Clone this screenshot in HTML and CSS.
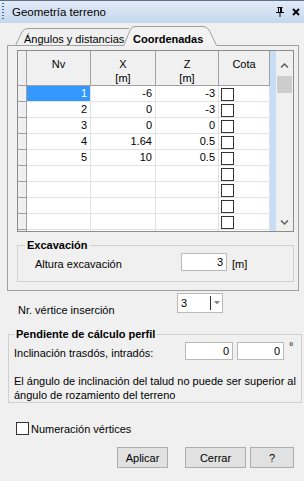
FILE: index.html
```html
<!DOCTYPE html>
<html lang="es">
<head>
    <meta charset="UTF-8">
    <title>Geometría terreno</title>
    <link rel="stylesheet" href="styles.css">
</head>
<body>
    <div class="titlebar">
        <span class="grip"></span>
        <span class="title">Geometría terreno</span>
        <span class="tb-icons">
            <svg width="8" height="10" viewBox="0 0 8 10">
                <path d="M1.5 0.5h5M2.5 0.5v5M5.5 0.5v5M0 5.5h8M4 6v4" stroke="#000" stroke-width="1" fill="none"/>
                <path d="M4.5 1v4.5" stroke="#000" stroke-width="1"/>
            </svg>
            <svg width="8" height="8" viewBox="0 0 8 8">
                <path d="M1 1L7 7M7 1L1 7" stroke="#000" stroke-width="1.8"/>
            </svg>
        </span>
    </div>

    <div class="tabstrip">
        <svg class="tab-lines" width="304" height="23" viewBox="0 0 304 23">
            <path d="M7.5 23V22.5H15.5L22 9Q24 5.5 28 5.5H129" stroke="#a0a0a0" fill="none"/>
            <path d="M15.5 22.5H124" stroke="#a0a0a0" fill="none"/>
            <path d="M123.5 23L130 7.5Q131.5 3.5 135 3.5H203Q207 3.5 209 7L216.5 22.5H298.5V23" fill="#f3f3f3" stroke="#a0a0a0"/>
        </svg>
        <span class="tab tab-first">Ángulos y distancias</span>
        <span class="tab tab-active">Coordenadas</span>
    </div>

    <div class="tabpage">
        <div class="grid">
            <div class="grid-main">
                <div class="gr head">
                    <div class="rh"></div>
                    <div>Nv</div>
                    <div>X<br>[m]</div>
                    <div>Z<br>[m]</div>
                    <div>Cota</div>
                </div>
                <div class="gr">
                    <div class="rh"></div>
                    <div class="num cur">1</div>
                    <div class="num">-6</div>
                    <div class="num">-3</div>
                    <div class="ck"><span class="box"></span></div>
                </div>
                <div class="gr">
                    <div class="rh"></div>
                    <div class="num">2</div>
                    <div class="num">0</div>
                    <div class="num">-3</div>
                    <div class="ck"><span class="box"></span></div>
                </div>
                <div class="gr">
                    <div class="rh"></div>
                    <div class="num">3</div>
                    <div class="num">0</div>
                    <div class="num">0</div>
                    <div class="ck"><span class="box"></span></div>
                </div>
                <div class="gr">
                    <div class="rh"></div>
                    <div class="num">4</div>
                    <div class="num">1.64</div>
                    <div class="num">0.5</div>
                    <div class="ck"><span class="box"></span></div>
                </div>
                <div class="gr">
                    <div class="rh"></div>
                    <div class="num">5</div>
                    <div class="num">10</div>
                    <div class="num">0.5</div>
                    <div class="ck"><span class="box"></span></div>
                </div>
                <div class="gr">
                    <div class="rh"></div><div></div><div></div><div></div>
                    <div class="ck"><span class="box"></span></div>
                </div>
                <div class="gr">
                    <div class="rh"></div><div></div><div></div><div></div>
                    <div class="ck"><span class="box"></span></div>
                </div>
                <div class="gr">
                    <div class="rh"></div><div></div><div></div><div></div>
                    <div class="ck"><span class="box"></span></div>
                </div>
                <div class="gr">
                    <div class="rh"></div><div></div><div></div><div></div>
                    <div class="ck"><span class="box"></span></div>
                </div>
                <div class="gr">
                    <div class="rh"></div><div></div><div></div><div></div>
                    <div class="ck"><span class="box"></span></div>
                </div>
            </div>
            <div class="grid-fill"></div>
            <div class="vscroll">
                <svg class="arrow-up" width="9" height="5" viewBox="0 0 9 5">
                    <path d="M1 4.5L4.5 1L8 4.5" stroke="#606060" stroke-width="1.5" fill="none"/>
                </svg>
                <div class="thumb"></div>
                <svg class="arrow-down" width="9" height="5" viewBox="0 0 9 5">
                    <path d="M1 0.5L4.5 4L8 0.5" stroke="#606060" stroke-width="1.5" fill="none"/>
                </svg>
            </div>
        </div>

        <div class="group group-exc">
            <span class="group-title">Excavación</span>
            <div class="field-row exc-row">
                <span class="exc-label">Altura excavación</span>
                <span class="input input-exc">3</span>
                <span class="unit">[m]</span>
            </div>
        </div>
    </div>

    <div class="vertex-row">
        <span class="vertex-label">Nr. vértice inserción</span>
        <span class="combo">
            <span class="combo-val">3</span>
            <span class="combo-btn">
                <svg width="6" height="4" viewBox="0 0 6 4"><path d="M0 0H6L3 3.5Z" fill="#888"/></svg>
            </span>
        </span>
    </div>

    <div class="group group-slope">
        <span class="group-title">Pendiente de cálculo perfil</span>
        <div class="field-row slope-row">
            <span class="slope-label">Inclinación trasdós, intradós:</span>
            <span class="input input-a">0</span>
            <span class="input input-b">0</span>
            <span class="deg">°</span>
        </div>
        <p class="note">El ángulo de inclinación del talud no puede ser superior al ángulo de rozamiento del terreno</p>
    </div>

    <label class="check-row">
        <span class="box"></span>
        <span>Numeración vértices</span>
    </label>

    <div class="buttons">
        <button class="btn btn-apply">Aplicar</button>
        <button class="btn btn-close">Cerrar</button>
        <button class="btn btn-help">?</button>
    </div>
</body>
</html>
```

FILE: styles.css
```css
* {
    box-sizing: border-box;
}

body {
    margin: 0;
    width: 304px;
    height: 481px;
    overflow: hidden;
    background-color: #f0f0f0;
    font-family: "Liberation Sans", Arial, sans-serif;
    font-size: 11px;
    color: #000;
}

/* title bar */
.titlebar {
    height: 23px;
    border-top: 1px solid #5f6f84;
    background: linear-gradient(#e2ebf7, #c5d7ee);
    display: flex;
    align-items: center;
    padding-left: 2px;
}

.grip {
    width: 2px;
    height: 18px;
    margin-right: 8px;
    background: repeating-linear-gradient(to bottom, #3f6aa6 0 1px, transparent 1px 3px);
}

.title {
    flex: 1;
    font-size: 11.5px;
}

.tb-icons {
    display: flex;
    align-items: center;
    gap: 8px;
    margin-right: 4px;
}

/* tabs */
.tabstrip {
    position: relative;
    height: 23px;
    display: flex;
    align-items: flex-start;
}

.tab-lines {
    position: absolute;
    left: 0;
    top: 0;
}

.tab {
    position: relative;
    padding-top: 10px;
    line-height: 13px;
}

.tab-first {
    margin-left: 24px;
    width: 109px;
}

.tab-active {
    font-weight: bold;
}

.tabpage {
    margin: 0 5px 0 7px;
    height: 245px;
    border: 1px solid #a0a0a0;
    border-top: none;
    padding: 4px 3px 0 9px;
}

/* data grid */
.grid {
    display: flex;
    width: 277px;
    height: 182px;
    border: 1px solid #8c8c8c;
    background-color: #fff;
}

.grid-main {
    width: 252px;
    overflow: hidden;
}

.gr {
    display: grid;
    grid-template-columns: 9px 64px 65px 63px 51px;
    height: 16px;
}

.gr > div {
    border-right: 1px solid #e2e2e2;
    border-bottom: 1px solid #e2e2e2;
}

.gr > .rh {
    background-color: #f0f0f0;
    border-color: #a0a0a0;
}

.head {
    height: 35px;
    background-color: #f0f0f0;
}

.head > div {
    border-color: #a0a0a0;
    text-align: center;
    padding-top: 6px;
    line-height: 14px;
}

.num {
    text-align: right;
    padding-right: 3px;
    line-height: 15px;
}

.cur {
    background-color: #3399ff;
    color: #fff;
}

.box {
    display: block;
    width: 13px;
    height: 13px;
    border: 1px solid #333;
    background-color: #fff;
}

.ck .box {
    margin: 2px 0 0 2px;
}

.grid-fill {
    width: 6px;
    background-color: #c7ddf6;
}

.vscroll {
    width: 17px;
    background-color: #f0f0f0;
    display: flex;
    flex-direction: column;
    align-items: center;
}

.arrow-up {
    margin-top: 12px;
}

.thumb {
    width: 15px;
    height: 17px;
    margin-top: 8px;
    background-color: #cdcdcd;
}

.arrow-down {
    margin-top: auto;
    margin-bottom: 6px;
}

/* group boxes */
.group {
    border: 1px solid #d0d0d0;
}

.group-title {
    display: block;
    width: fit-content;
    margin: -7px 0 0 7px;
    padding: 0 2px;
    background-color: #f0f0f0;
    font-weight: bold;
    line-height: 13px;
}

.field-row {
    display: flex;
    margin-top: 1px;
}

.input {
    display: block;
    height: 18px;
    border: 1px solid #b9b9b9;
    background-color: #fff;
    text-align: right;
    padding-right: 3px;
    line-height: 16px;
}

.group-exc {
    width: 277px;
    margin-top: 13px;
    padding-bottom: 10px;
}

.exc-row {
    align-items: center;
    padding-left: 17px;
}

.exc-label {
    width: 146px;
    padding-top: 3px;
}

.input-exc {
    width: 46px;
}

.unit {
    margin-left: 5px;
    padding-top: 4px;
}

.vertex-row {
    display: flex;
    margin-top: 2px;
    padding-left: 18px;
}

.vertex-label {
    width: 159px;
    padding-top: 11px;
    line-height: 13px;
}

.combo {
    display: flex;
    width: 46px;
    height: 20px;
    border: 1px solid #b9b9b9;
    background-color: #fff;
}

.combo-val {
    flex: 1;
    padding-left: 3px;
    border-right: 1px solid #333;
    margin: 2px 0;
    line-height: 14px;
}

.combo-btn {
    width: 11px;
    display: flex;
    align-items: center;
    justify-content: center;
}

.group-slope {
    width: 294px;
    margin: 17px 0 0 8px;
    padding-left: 5px;
}

.group-slope .group-title {
    margin-left: 0;
}

.slope-label {
    width: 171px;
    padding-top: 5px;
    line-height: 13px;
}

.input-a {
    width: 48px;
}

.input-b {
    width: 47px;
    margin-left: 4px;
}

.deg {
    margin-left: 5px;
    line-height: 8px;
}

.note {
    margin: 14px 0 0 0;
    line-height: 14px;
}

.check-row {
    display: flex;
    align-items: center;
    gap: 2px;
    margin: 19px 0 0 16px;
}

.buttons {
    display: flex;
    margin-top: 12px;
    padding-left: 117px;
}

.btn {
    height: 21px;
    border: 1px solid #adadad;
    background-color: #e1e1e1;
    font-family: "Liberation Sans", Arial, sans-serif;
    font-size: 11px;
    padding: 0;
}

.btn-apply {
    width: 51px;
}

.btn-close {
    width: 61px;
    margin-left: 17px;
}

.btn-help {
    width: 44px;
    margin-left: 4px;
}
```
